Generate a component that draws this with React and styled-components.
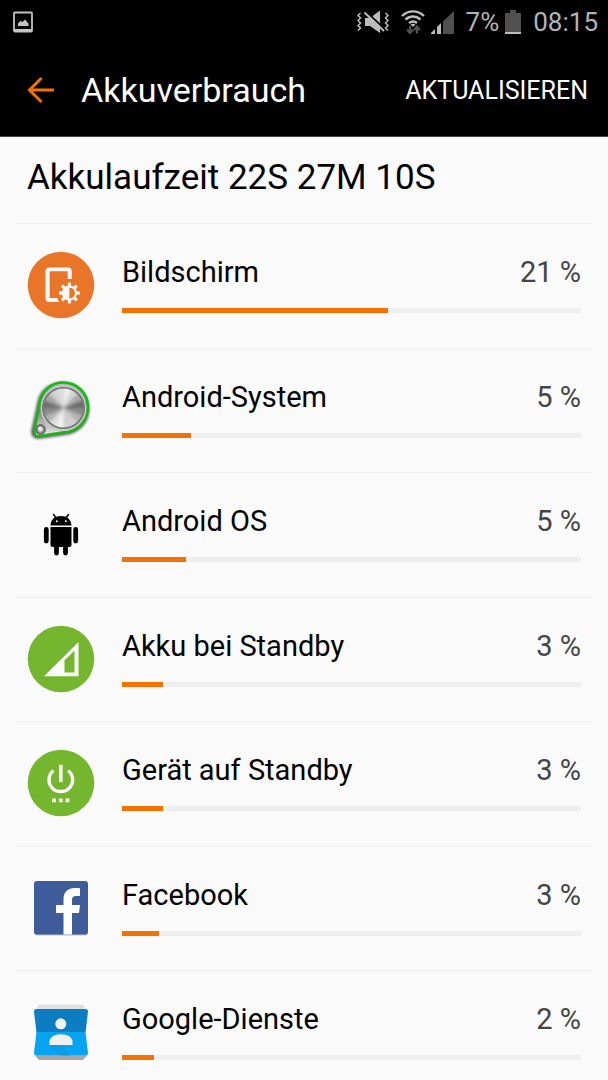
import React from "react";
import styled, { createGlobalStyle } from "styled-components";

const GlobalStyle = createGlobalStyle`
  *, *::before, *::after { box-sizing: border-box; }
  body {
    margin: 0;
    background: #fafafa;
    color: #000;
    font-family: Roboto, "Noto Sans", sans-serif;
  }
`;

const Screen = styled.div`
  display: flex;
  flex-direction: column;
  height: 100vh;
  overflow: hidden;
`;

const StatusBar = styled.div`
  flex: none;
  display: flex;
  align-items: center;
  justify-content: space-between;
  height: 44px;
  padding: 0 10px 0 12px;
  background: #000;
  color: #b4b4b4;
  font-size: 26px;
  line-height: 44px;
`;

const StatusGroup = styled.div`
  display: flex;
  align-items: center;
  gap: ${(p) => p.$gap}px;
`;

const AppBar = styled.header`
  flex: none;
  display: flex;
  align-items: center;
  height: 93px;
  padding: 0 20px 0 24px;
  background: #000;
  border-bottom: 1px solid #4a4644;
`;

const PlainButton = styled.button`
  display: flex;
  align-items: center;
  padding: 0;
  border: 0;
  background: none;
  color: ${(p) => p.$color};
  font: inherit;
  font-size: 25px;
  line-height: 37px;
  cursor: pointer;
`;

const Title = styled.h1`
  flex: 1;
  margin: 0 0 0 25px;
  color: #fff;
  font-size: 34px;
  font-weight: 400;
  line-height: 44px;
`;

const Runtime = styled.h2`
  flex: none;
  margin: 0;
  padding: 19px 28px 23px 27px;
  font-size: 35px;
  font-weight: 400;
  line-height: 44px;
`;

const List = styled.ul`
  display: grid;
  grid-auto-rows: 125px 124px;
  margin: 0;
  padding: 0 16px;
  list-style: none;
`;

const Row = styled.li`
  display: flex;
  gap: 28px;
  padding: 28px 11px 0 12px;
  border-top: 1px solid #f0f0f0;
`;

const IconBox = styled.div`
  flex: none;
  width: 66px;
  height: 66px;

  svg { display: block; overflow: visible; }
`;

const Usage = styled.div`
  flex: 1;
  min-width: 0;
`;

const Labels = styled.div`
  display: flex;
  justify-content: space-between;
  padding-top: 2px;
  font-size: 29px;
  line-height: 36px;
`;

const Percent = styled.span`
  color: #454545;
`;

const Track = styled.div`
  height: 5px;
  margin-top: 18px;
  background: #eee;
`;

const Fill = styled.div`
  height: 5px;
  background: #f57100;
`;

function PictureIcon() {
  return (
    <svg width="22" height="22" viewBox="0 0 22 22" aria-hidden="true">
      <rect x="2" y="1.5" width="18" height="19" rx="1" fill="none" stroke="#c4c4c4" strokeWidth="1.8" />
      <path d="M2 18h18v3H2z" fill="#c4c4c4" />
      <path d="M6 15v-2.500l2.500-2.500 2 1 2.500-2.500 3.500 4V15z" fill="#c4c4c4" />
    </svg>
  );
}

function MuteVibrateIcon() {
  return (
    <svg width="32" height="24" viewBox="0 0 32 24" aria-hidden="true">
      <path d="M8 8h5l10-7.500V23L13 16H8z" fill="#bdbdbd" />
      <path d="M9 1.500 28.500 20" stroke="#000" strokeWidth="2" />
      <path d="M7.500 2.500 27 21" stroke="#bdbdbd" strokeWidth="2" />
      <path
        d="M3.500 3 1 5.500l2.500 2.500L1 10.500 3.500 13 1 15.500 3.500 18 1 20.500M28.500 3 31 5.500 28.500 8l2.500 2.500-2.500 2.500 2.500 2.500-2.500 2.500 2.500 2.500"
        fill="none"
        stroke="#bdbdbd"
        strokeWidth="1.500"
      />
    </svg>
  );
}

function WifiIcon() {
  return (
    <svg width="24" height="24" viewBox="0 0 24 24" aria-hidden="true">
      <path
        d="M1 6C7.500-.2 16.500-.2 23 6M4.500 9.500c4.500-4 10.500-4 15 0M8 13c2.500-2 5.500-2 8 0"
        fill="none"
        stroke="#bdbdbd"
        strokeWidth="2.400"
      />
      <path d="m9.500 14.500 2.500 2.500 2.500-2.500c-1.500-1-3.500-1-5 0z" fill="#bdbdbd" />
      <path d="M9 16v6M6 19.500l3 3.500 3-3.500M16 23.500v-6M13 20l3-3.500 3 3.500" fill="none" stroke="#505050" strokeWidth="2.200" />
    </svg>
  );
}

function SignalIcon() {
  return (
    <svg width="23" height="23" viewBox="0 0 23 23" aria-hidden="true">
      <path d="M0 23v-1l4-4v5zM6 23v-7l4-4v11z" fill="#bdbdbd" />
      <path d="M12 23V10.500L23 0v23z" fill="#505050" />
    </svg>
  );
}

function BatteryIcon() {
  return (
    <svg width="16" height="24" viewBox="0 0 16 24" aria-hidden="true">
      <path d="M5 0h6v3h5v21H0V3h5z" fill="#505050" />
      <path d="M0 22h16v2H0z" fill="#bdbdbd" />
    </svg>
  );
}

function BackIcon() {
  return (
    <svg width="32" height="32" viewBox="0 0 32 32" aria-hidden="true">
      <path d="M30 16H5M17.500 4 5.500 16l12 12" fill="none" stroke="#f57100" strokeWidth="3" />
    </svg>
  );
}

function DisplayIcon() {
  const teeth = [0, 45, 90, 135, 180, 225, 270, 315];
  return (
    <svg width="66" height="66" viewBox="0 0 66 66" aria-hidden="true">
      <circle cx="33" cy="33" r="33.300" fill="#e97628" />
      <path
        d="M43.800 27V19.500a4 4 0 0 0-4-4H21.500a4 4 0 0 0-4 4V46a4 4 0 0 0 4 4H31l-2-4h-7.300V19.300h18V27z"
        fill="#fafafa"
      />
      {teeth.map((angle) => (
        <path key={angle} d="M48 39.400h3.800v3.200H48z" fill="#fafafa" transform={`rotate(${angle} 41.400 41)`} />
      ))}
      <circle cx="41.400" cy="41" r="6.600" fill="none" stroke="#fafafa" strokeWidth="2" />
      <path d="M41.400 34.500a6.500 6.500 0 0 0 0 13z" fill="#fafafa" />
    </svg>
  );
}

const DIAL_COLORS = [
  "#eeeeee", "#d4d4d4", "#a8a8a8", "#6a6a6a", "#8a8a8a", "#b4b4b4", "#d0d0d0", "#d0d0d0",
  "#f2f2f2", "#dddddd", "#b0b0b0", "#8a8a8a", "#707070", "#a8a8a8", "#d0d0d0", "#dddddd",
];

function wedge(cx, cy, r, index, count) {
  const a = (index * 2 * Math.PI) / count - Math.PI / 2;
  const b = a + (2.2 * Math.PI) / count;
  return `M${cx} ${cy}L${cx + r * Math.cos(a)} ${cy + r * Math.sin(a)}A${r} ${r} 0 0 1 ${cx + r * Math.cos(b)} ${cy + r * Math.sin(b)}z`;
}

function SystemIcon() {
  return (
    <svg width="66" height="66" viewBox="0 0 66 66" aria-hidden="true">
      <defs>
        <filter id="soft" x="-20%" y="-20%" width="140%" height="140%">
          <feGaussianBlur stdDeviation="1.500" />
        </filter>
        <filter id="blend" x="-10%" y="-10%" width="120%" height="120%">
          <feGaussianBlur stdDeviation="1.600" />
        </filter>
        <clipPath id="dial">
          <circle cx="35.500" cy="31" r="19.800" />
        </clipPath>
        <linearGradient id="plate" x1="0" y1="0" x2="0" y2="1">
          <stop offset="0" stopColor="#bbb" />
          <stop offset="0.500" stopColor="#777" />
          <stop offset="1" stopColor="#eee" />
        </linearGradient>
        <radialGradient id="knob">
          <stop offset="0" stopColor="#fff" />
          <stop offset="0.600" stopColor="#999" />
          <stop offset="1" stopColor="#444" />
        </radialGradient>
      </defs>
      <path
        d="M10 24C12.500 12 23 5.500 35 5.500c14.500 0 26 12 26 26.500 0 12-8 22-19.500 25L11 61.500c-4.500.5-8-3-7.500-7.500z"
        fill="#111"
        opacity="0.800"
        filter="url(#soft)"
      />
      <path
        d="M12 25C14.500 13 24 5.500 35 5.500c14 0 25 10.500 25 24.500 0 12-8 21.500-19 24.500L11.500 59c-4 .5-5.500-2-5-6z"
        fill="url(#plate)"
        stroke="#12bd12"
        strokeWidth="2.600"
      />
      <circle cx="35.500" cy="31" r="22.200" fill="none" stroke="#c8c8c8" strokeWidth="1.500" />
      <g clipPath="url(#dial)">
        <circle cx="35.500" cy="31" r="20" fill="#aaa" />
        <g filter="url(#blend)">
          {DIAL_COLORS.map((color, i) => (
            <path key={i} d={wedge(35.5, 31, 26, i, 16)} fill={color} />
          ))}
        </g>
      </g>
      <circle cx="35.500" cy="31" r="20.300" fill="none" stroke="#777" strokeWidth="1.500" />
      <circle cx="12.500" cy="52.500" r="5" fill="url(#knob)" stroke="#777" />
      <circle cx="12" cy="51.500" r="1.800" fill="#eee" />
    </svg>
  );
}

function AndroidIcon() {
  return (
    <svg width="66" height="66" viewBox="0 0 66 66" aria-hidden="true">
      <path
        d="M22.500 24.500C23 18 27 15 33 15s10 3 10.500 9.500zM22.500 26h21v18a2 2 0 0 1-2 2h-17a2 2 0 0 1-2-2z"
        fill="#000"
      />
      <path d="m25.500 13.500 3 4M40.500 13.500l-3 4" stroke="#000" strokeWidth="1.500" strokeLinecap="round" />
      <path d="M18.300 28.500v11.500M47.700 28.500v11.500M28.500 45v7M37.500 45v7" stroke="#000" strokeWidth="4.800" strokeLinecap="round" />
      <circle cx="28.800" cy="20.300" r="1" fill="#fff" />
      <circle cx="37.800" cy="20.300" r="1" fill="#fff" />
    </svg>
  );
}

function CellStandbyIcon() {
  return (
    <svg width="66" height="66" viewBox="0 0 66 66" aria-hidden="true">
      <circle cx="33" cy="33" r="33.300" fill="#74b62e" />
      <path d="M16 50.300 50.500 16v34.300z" fill="#fafafa" />
      <path d="M36.500 34.500 46.500 24.500v22h-10z" fill="#74b62e" />
    </svg>
  );
}

function PowerIcon() {
  return (
    <svg width="66" height="66" viewBox="0 0 66 66" aria-hidden="true">
      <circle cx="33" cy="33" r="33.300" fill="#74b62e" />
      <path d="M25.500 20.500a11.800 11.800 0 1 0 14.600 0" fill="none" stroke="#fafafa" strokeWidth="3.400" />
      <path d="M32.800 14.800v17.400" stroke="#fafafa" strokeWidth="3.600" />
      <path d="M24.200 48.600h3.800v3.600h-3.800zM30.900 48.600h3.800v3.600h-3.800zM37.600 48.600h3.800v3.600h-3.800z" fill="#fafafa" />
    </svg>
  );
}

function FacebookIcon() {
  return (
    <svg width="66" height="66" viewBox="0 0 66 66" aria-hidden="true">
      <rect x="6" y="7" width="54" height="53.500" rx="3" fill="#c2c2c2" />
      <rect x="6" y="6" width="54" height="53.500" rx="3" fill="#3f5c9a" />
      <path
        d="M35.500 59.500V38H28v-8h7.500v-5.500c0-7.500 4.500-11.500 11-11.500 2.500 0 4.500.1 5.500.3v7.700h-4c-3 0-4 1.500-4 4v5h8L51 38h-7v21.500z"
        fill="#fff"
      />
    </svg>
  );
}

function ContactsIcon() {
  return (
    <svg width="66" height="66" viewBox="0 0 66 66" aria-hidden="true">
      <path d="M11 5.500h44l4 7H7zM7 54h52l-4 7H11z" fill="#e0e0e0" />
      <path d="M7 56.500h52l-4 4.500H11z" fill="#a5a5a5" />
      <path d="M6 12.500c0-1.500 1-2.500 2.500-2.500h49c1.500 0 2.500 1 2.500 2.500l-2.500 21h-49z" fill="#0d7dc1" />
      <path d="M8.500 33h49L60 54c.2 1.500-1 2.500-2.500 2.500h-49C7 56.500 5.800 55.500 6 54z" fill="#06a4f1" />
      <path d="M21.500 46h12l9 10.500H32z" fill="#0a9de8" />
      <circle cx="32.800" cy="24.800" r="5.500" fill="#f1f1f1" />
      <path d="M21.500 46v-3.500c0-4 5-7.200 11.500-7.200s11.500 3.200 11.500 7.200V46z" fill="#f1f1f1" />
    </svg>
  );
}

const APPS = [
  { name: "Bildschirm", percent: 21, bar: 58, Icon: DisplayIcon },
  { name: "Android-System", percent: 5, bar: 15, Icon: SystemIcon },
  { name: "Android OS", percent: 5, bar: 14, Icon: AndroidIcon },
  { name: "Akku bei Standby", percent: 3, bar: 9, Icon: CellStandbyIcon },
  { name: "Gerät auf Standby", percent: 3, bar: 9, Icon: PowerIcon },
  { name: "Facebook", percent: 3, bar: 8, Icon: FacebookIcon },
  { name: "Google-Dienste", percent: 2, bar: 7, Icon: ContactsIcon },
];

export default function App() {
  return (
    <Screen>
      <GlobalStyle />
      <StatusBar>
        <PictureIcon />
        <StatusGroup $gap={12}>
          <MuteVibrateIcon />
          <StatusGroup $gap={6}>
            <WifiIcon />
            <SignalIcon />
          </StatusGroup>
          <StatusGroup $gap={6}>
            <span>7%</span>
            <BatteryIcon />
          </StatusGroup>
          <span>08:15</span>
        </StatusGroup>
      </StatusBar>
      <AppBar>
        <PlainButton type="button" aria-label="Zurück" $color="#f57100">
          <BackIcon />
        </PlainButton>
        <Title>Akkuverbrauch</Title>
        <PlainButton type="button" $color="#fff">AKTUALISIEREN</PlainButton>
      </AppBar>
      <main>
        <Runtime>Akkulaufzeit 22S 27M 10S</Runtime>
        <List>
          {APPS.map(({ name, percent, bar, Icon }) => (
            <Row key={name}>
              <IconBox>
                <Icon />
              </IconBox>
              <Usage>
                <Labels>
                  <span>{name}</span>
                  <Percent>{percent} %</Percent>
                </Labels>
                <Track role="progressbar" aria-label={name} aria-valuenow={percent}>
                  <Fill style={{ width: `${bar}%` }} />
                </Track>
              </Usage>
            </Row>
          ))}
        </List>
      </main>
    </Screen>
  );
}
